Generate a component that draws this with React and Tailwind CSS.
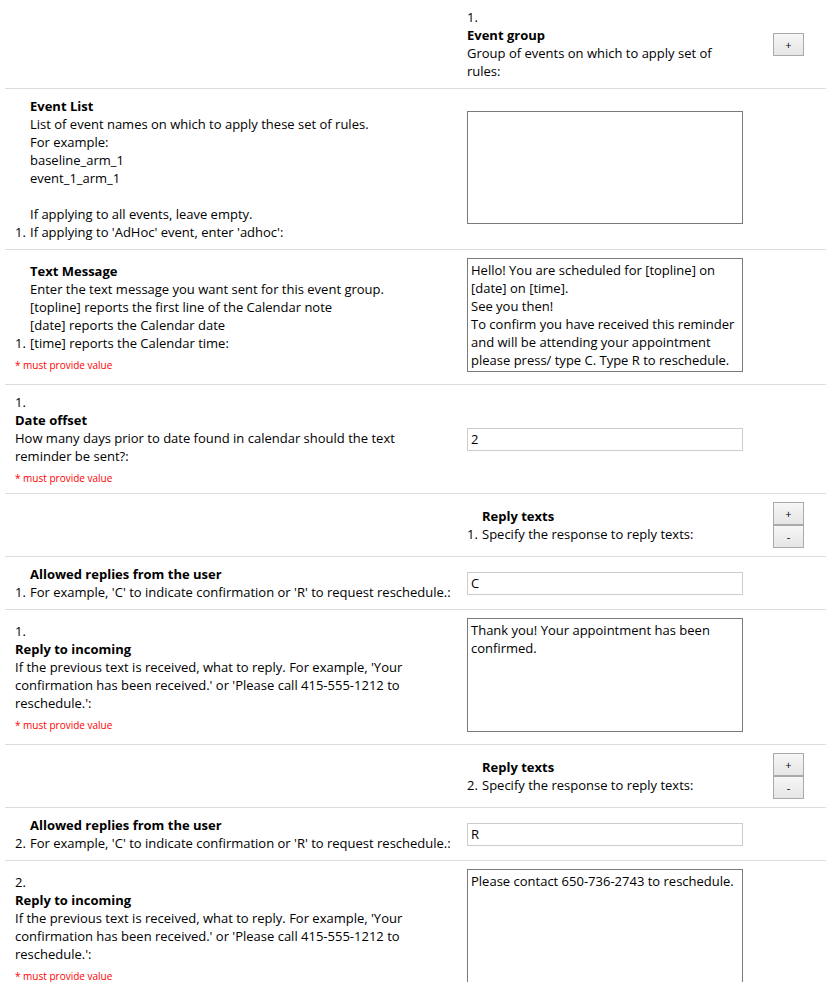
import React from "react";

const Req = () => (
  <div className="mt-[7px] text-[10px] leading-[13px] text-[#ff0000]">* must provide value</div>
);

const Marker = ({ n }) => <span className="inline-block w-[15px]">{n}.</span>;

const TextArea = ({ value = "", h = "h-[114px]" }) => (
  <textarea
    readOnly
    value={value}
    className={`block w-[276px] ${h} resize-none overflow-hidden border border-[#7a7a7a] bg-white px-[3px] py-[2px] text-[13px] leading-[18px] text-black outline-none`}
  />
);

const Input = ({ value }) => (
  <input
    readOnly
    value={value}
    className="block h-[23px] w-[276px] border border-[#cccccc] bg-white px-[3px] text-[13px] leading-[18px] text-black outline-none"
  />
);

const Btn = ({ children }) => (
  <button className="flex h-[23px] w-[31px] items-center justify-center border border-[#aaaaaa] bg-gradient-to-b from-[#f6f6f6] to-[#e6e6e6] text-[11px] leading-none text-black">
    {children}
  </button>
);

const Row = ({ left, right, cls = "" }) => (
  <div className={`flex items-center border-b border-[#dddddd] ${cls}`}>
    <div className="w-[450px] shrink-0 py-2 pl-[10px] pr-2">{left}</div>
    <div className="flex-1 py-2 pl-[12px]">{right}</div>
  </div>
);

const HeaderRow = ({ content, buttons }) => (
  <div className="flex items-center border-b border-[#dddddd]">
    <div className="w-[450px] shrink-0" />
    <div className="flex flex-1 items-center py-2 pl-[12px]">
      <div className="w-[275px]">{content}</div>
      <div className="ml-[31px] flex flex-col">{buttons}</div>
    </div>
  </div>
);

const ReplyHeader = ({ n }) => (
  <HeaderRow
    content={
      <div>
        <div className="pl-[15px] font-bold">Reply texts</div>
        <div className="whitespace-nowrap">
          <Marker n={n} />
          Specify the response to reply texts:
        </div>
      </div>
    }
    buttons={
      <>
        <Btn>+</Btn>
        <Btn>-</Btn>
      </>
    }
  />
);

const AllowedRow = ({ n, value }) => (
  <Row
    left={
      <div>
        <div className="pl-[15px] font-bold">Allowed replies from the user</div>
        <div className="whitespace-nowrap">
          <Marker n={n} />
          For example, 'C' to indicate confirmation or 'R' to request reschedule.:
        </div>
      </div>
    }
    right={<Input value={value} />}
  />
);

const ReplyRow = ({ n, value }) => (
  <Row
    left={
      <div>
        <div>{n}.</div>
        <div className="font-bold">Reply to incoming</div>
        <div>
          If the previous text is received, what to reply. For example, 'Your confirmation has been
          received.' or 'Please call 415-555-1212 to reschedule.':
        </div>
        <Req />
      </div>
    }
    right={
      <div className="pb-[4px]">
        <TextArea value={value} h="h-[114px]" />
      </div>
    }
  />
);

export default function App() {
  return (
    <div className="min-h-[982px] bg-white font-['Open_Sans',sans-serif] text-[13px] leading-[18px] text-black">
      <div className="ml-[5px] w-[821px]">
        <HeaderRow
          content={
            <div>
              <div>1.</div>
              <div className="font-bold">Event group</div>
              <div>Group of events on which to apply set of rules:</div>
            </div>
          }
          buttons={<Btn>+</Btn>}
        />

        <Row
          left={
            <div>
              <div className="pl-[15px] font-bold">Event List</div>
              <div className="pl-[15px]">List of event names on which to apply these set of rules.</div>
              <div className="pl-[15px]">For example:</div>
              <div className="pl-[15px]">baseline_arm_1</div>
              <div className="pl-[15px]">event_1_arm_1</div>
              <div className="h-[18px]" />
              <div className="pl-[15px]">If applying to all events, leave empty.</div>
              <div>
                <Marker n={1} />
                If applying to 'AdHoc' event, enter 'adhoc':
              </div>
            </div>
          }
          right={
            <div className="pb-[4px]">
              <TextArea h="h-[113px]" />
            </div>
          }
        />

        <Row
          left={
            <div>
              <div className="pl-[15px] font-bold">Text Message</div>
              <div className="pl-[15px]">Enter the text message you want sent for this event group.</div>
              <div className="pl-[15px]">[topline] reports the first line of the Calendar note</div>
              <div className="pl-[15px]">[date] reports the Calendar date</div>
              <div>
                <Marker n={1} />
                [time] reports the Calendar time:
              </div>
              <Req />
            </div>
          }
          right={
            <div className="pb-[4px]">
              <TextArea
                h="h-[114px]"
                value={
                  "Hello! You are scheduled for [topline] on [date] on [time].\nSee you then!\nTo confirm you have received this reminder and will be attending your appointment please press/ type C. Type R to reschedule."
                }
              />
            </div>
          }
        />

        <Row
          left={
            <div>
              <div>1.</div>
              <div className="font-bold">Date offset</div>
              <div>How many days prior to date found in calendar should the text reminder be sent?:</div>
              <Req />
            </div>
          }
          right={<Input value="2" />}
        />

        <ReplyHeader n={1} />
        <AllowedRow n={1} value="C" />
        <ReplyRow n={1} value="Thank you! Your appointment has been confirmed." />

        <ReplyHeader n={2} />
        <AllowedRow n={2} value="R" />
        <ReplyRow n={2} value="Please contact 650-736-2743 to reschedule." />
      </div>
    </div>
  );
}
